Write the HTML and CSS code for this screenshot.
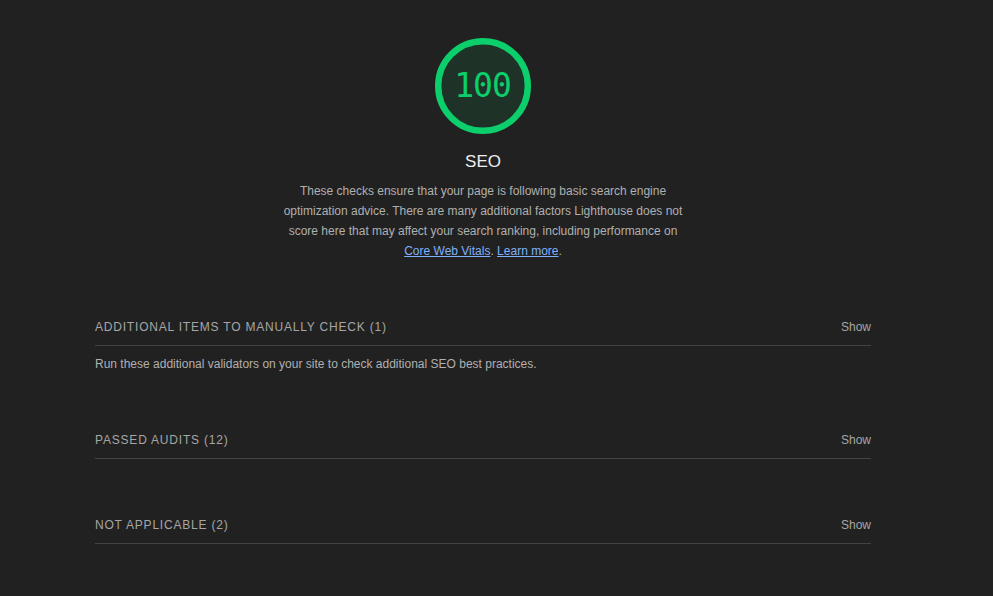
FILE: index.html
```html
<!DOCTYPE html>
<html lang="en">
<head>
<meta charset="utf-8">
<title>SEO</title>
<link rel="stylesheet" href="styles.css">
</head>
<body>
<div class="page">
  <header class="cat-header">
    <div class="gauge">
      <svg viewBox="0 0 120 120" width="96" height="96" aria-hidden="true">
        <circle cx="60" cy="60" r="56" fill="rgba(12,206,107,0.1)" stroke="#0cce6b" stroke-width="8"/>
      </svg>
      <span class="gauge-score">100</span>
    </div>
    <h2 class="cat-title">SEO</h2>
    <p class="cat-desc">These checks ensure that your page is following basic search engine optimization advice. There are many additional factors Lighthouse does not score here that may affect your search ranking, including performance on <a href="#">Core Web Vitals</a>. <a href="#">Learn more</a>.</p>
  </header>

  <section class="clump">
    <div class="clump-head">
      <span class="clump-title">Additional items to manually check (1)</span>
      <span class="clump-toggle">Show</span>
    </div>
    <p class="clump-desc">Run these additional validators on your site to check additional SEO best practices.</p>
  </section>

  <section class="clump">
    <div class="clump-head">
      <span class="clump-title">Passed audits (12)</span>
      <span class="clump-toggle">Show</span>
    </div>
  </section>

  <section class="clump">
    <div class="clump-head">
      <span class="clump-title">Not applicable (2)</span>
      <span class="clump-toggle">Show</span>
    </div>
  </section>
</div>
</body>
</html>
```

FILE: styles.css
```css
html, body {
  margin: 0;
  padding: 0;
  background: #212121;
}
body {
  font-family: "Liberation Sans", Arial, sans-serif;
  font-size: 12px;
  color: #bdbdbd;
}
.page {
  width: 776px;
  margin-left: 95px;
  padding-top: 38px;
}
.cat-header {
  display: flex;
  flex-direction: column;
  align-items: center;
}
.gauge {
  position: relative;
  width: 96px;
  height: 96px;
}
.gauge svg {
  display: block;
}
.gauge-score {
  position: absolute;
  inset: 0 0 2px 0;
  display: flex;
  align-items: center;
  justify-content: center;
  font-family: "DejaVu Sans Mono", "Liberation Mono", monospace;
  font-size: 33px;
  letter-spacing: -1px;
  text-indent: -1px;
  color: #0cce6b;
}
.cat-title {
  margin: 18px 0 0;
  font-size: 17px;
  line-height: 20px;
  font-weight: normal;
  color: #eeeeee;
}
.cat-desc {
  margin: 9px 0 0;
  max-width: 404px;
  text-align: center;
  line-height: 20px;
  color: #b0b0b0;
}
.cat-desc a {
  color: #7fb2fb;
  text-decoration: underline;
}
.clump {
  margin-bottom: 46px;
}
.cat-header + .clump {
  margin-top: 46px;
}
.clump-head {
  display: flex;
  justify-content: space-between;
  align-items: center;
  height: 37px;
  padding-top: 1px;
  border-bottom: 1px solid #424242;
}
.clump-title {
  text-transform: uppercase;
  letter-spacing: 0.8px;
  color: #a6a6a6;
}
.clump-toggle {
  color: #a6a6a6;
}
.clump-desc {
  margin: 8px 0 0;
  line-height: 20px;
  color: #b0b0b0;
}
```
